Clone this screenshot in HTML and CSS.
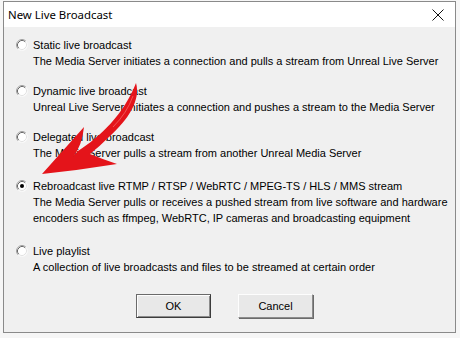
FILE: index.html
```html
<!DOCTYPE html>
<html>
<head>
<meta charset="utf-8">
<link rel="stylesheet" href="styles.css">
</head>
<body>
<div class="window">
  <div class="titlebar">
    <span class="title">New Live Broadcast</span>
    <svg class="close" width="12" height="12" viewBox="0 0 12 12"><path d="M0.5 0.5 L11.5 11.5 M11.5 0.5 L0.5 11.5" stroke="#111" stroke-width="1" fill="none"/></svg>
  </div>
  <div class="content">
    <div class="options">
      <div class="option">
        <div class="label-row">
          <svg class="radio" width="12" height="12" viewBox="0 0 12 12"><circle cx="6" cy="6" r="5.5" fill="#fff"/><path d="M2.11 9.89 A5.5 5.5 0 0 1 9.89 2.11" stroke="#a0a0a0" fill="none"/><path d="M2.82 9.18 A4.5 4.5 0 0 1 9.18 2.82" stroke="#696969" fill="none"/><path d="M9.89 2.11 A5.5 5.5 0 0 1 2.11 9.89" stroke="#f8f8f8" fill="none"/><path d="M9.18 2.82 A4.5 4.5 0 0 1 2.82 9.18" stroke="#e3e3e3" fill="none"/></svg>
          <span>Static live broadcast</span>
        </div>
        <div class="desc">The Media Server initiates a connection and pulls a stream from Unreal Live Server</div>
      </div>
      <div class="option">
        <div class="label-row">
          <svg class="radio" width="12" height="12" viewBox="0 0 12 12"><circle cx="6" cy="6" r="5.5" fill="#fff"/><path d="M2.11 9.89 A5.5 5.5 0 0 1 9.89 2.11" stroke="#a0a0a0" fill="none"/><path d="M2.82 9.18 A4.5 4.5 0 0 1 9.18 2.82" stroke="#696969" fill="none"/><path d="M9.89 2.11 A5.5 5.5 0 0 1 2.11 9.89" stroke="#f8f8f8" fill="none"/><path d="M9.18 2.82 A4.5 4.5 0 0 1 2.82 9.18" stroke="#e3e3e3" fill="none"/></svg>
          <span>Dynamic live broadcast</span>
        </div>
        <div class="desc">Unreal Live Server initiates a connection and pushes a stream to the Media Server</div>
      </div>
      <div class="option">
        <div class="label-row">
          <svg class="radio" width="12" height="12" viewBox="0 0 12 12"><circle cx="6" cy="6" r="5.5" fill="#fff"/><path d="M2.11 9.89 A5.5 5.5 0 0 1 9.89 2.11" stroke="#a0a0a0" fill="none"/><path d="M2.82 9.18 A4.5 4.5 0 0 1 9.18 2.82" stroke="#696969" fill="none"/><path d="M9.89 2.11 A5.5 5.5 0 0 1 2.11 9.89" stroke="#f8f8f8" fill="none"/><path d="M9.18 2.82 A4.5 4.5 0 0 1 2.82 9.18" stroke="#e3e3e3" fill="none"/></svg>
          <span>Delegated live broadcast</span>
        </div>
        <div class="desc">The Media Server pulls a stream from another Unreal Media Server</div>
      </div>
      <div class="option option-wide">
        <div class="label-row">
          <svg class="radio" width="12" height="12" viewBox="0 0 12 12"><circle cx="6" cy="6" r="5.5" fill="#fff"/><path d="M2.11 9.89 A5.5 5.5 0 0 1 9.89 2.11" stroke="#a0a0a0" fill="none"/><path d="M2.82 9.18 A4.5 4.5 0 0 1 9.18 2.82" stroke="#696969" fill="none"/><path d="M9.89 2.11 A5.5 5.5 0 0 1 2.11 9.89" stroke="#f8f8f8" fill="none"/><path d="M9.18 2.82 A4.5 4.5 0 0 1 2.82 9.18" stroke="#e3e3e3" fill="none"/><circle cx="6" cy="6" r="2" fill="#000"/></svg>
          <span>Rebroadcast live RTMP / RTSP / WebRTC / MPEG-TS / HLS / MMS stream</span>
        </div>
        <div class="desc">The Media Server pulls or receives a pushed stream from live software and hardware<br>encoders such as ffmpeg, WebRTC, IP cameras and broadcasting equipment</div>
      </div>
      <div class="option option-wide">
        <div class="label-row">
          <svg class="radio" width="12" height="12" viewBox="0 0 12 12"><circle cx="6" cy="6" r="5.5" fill="#fff"/><path d="M2.11 9.89 A5.5 5.5 0 0 1 9.89 2.11" stroke="#a0a0a0" fill="none"/><path d="M2.82 9.18 A4.5 4.5 0 0 1 9.18 2.82" stroke="#696969" fill="none"/><path d="M9.89 2.11 A5.5 5.5 0 0 1 2.11 9.89" stroke="#f8f8f8" fill="none"/><path d="M9.18 2.82 A4.5 4.5 0 0 1 2.82 9.18" stroke="#e3e3e3" fill="none"/></svg>
          <span>Live playlist</span>
        </div>
        <div class="desc">A collection of live broadcasts and files to be streamed at certain order</div>
      </div>
    </div>
    <div class="buttons">
      <button class="btn btn-default">OK</button>
      <button class="btn">Cancel</button>
    </div>
  </div>
</div>
<svg class="arrow" width="460" height="338" viewBox="0 0 460 338">
  <path d="M136 83 C141 100, 128 120, 110 136 Q100 146 90 154 Q102 159 117 164 Q80 170 42 174 L84 127 Q82 146 73 157 Q75 154 78 151 C100 137, 124 114, 136 83 Z" fill="#e4141a"/>
  <path d="M133 96 Q127 113 113 127" stroke="#f27070" stroke-width="0.7" fill="none"/>
</svg>
</body>
</html>
```
FILE: styles.css
```css
html, body {
  margin: 0;
  padding: 0;
}
body {
  background: #f6f6f6;
  width: 460px;
  height: 338px;
  position: relative;
  overflow: hidden;
  font-family: "Liberation Sans", Arial, sans-serif;
  font-size: 11px;
  color: #000;
}
.window {
  margin: 1px 0 0 3px;
  width: 453px;
  height: 332px;
  box-sizing: border-box;
  border: 1px solid #8a8a8a;
  background: #f0f0f0;
  display: flex;
  flex-direction: column;
}
.titlebar {
  height: 25px;
  background: #fff;
  display: flex;
  align-items: center;
  justify-content: space-between;
  padding: 0 11px 0 4px;
  flex-shrink: 0;
}
.title {
  font-family: "Noto Sans", "Open Sans", sans-serif;
  font-size: 11.4px;
  line-height: 16px;
}
.close {
  display: block;
}
.content {
  padding: 10px 0 0 12px;
  display: flex;
  flex-direction: column;
}
.options {
  display: flex;
  flex-direction: column;
  gap: 14px;
}
.option-wide {
  margin-top: 3px;
}
.label-row {
  display: flex;
  align-items: center;
  gap: 5px;
  height: 16px;
  line-height: 16px;
}
.radio {
  display: block;
  flex-shrink: 0;
}
.desc {
  margin-left: 17px;
  line-height: 16px;
  white-space: nowrap;
}
.buttons {
  display: flex;
  gap: 27px;
  margin-top: 19px;
  padding-left: 120px;
}
.btn {
  width: 75px;
  height: 24px;
  box-sizing: border-box;
  background: #e8e8e8;
  font-family: "Liberation Sans", Arial, sans-serif;
  font-size: 11px;
  color: #000;
  padding: 0;
  border: 1px solid;
  border-color: #fdfdfd #8c8c8c #8c8c8c #fdfdfd;
  box-shadow: 1px 1px 0 #6a6a6a;
}
.btn-default {
  border-color: #6a6a6a #3c3c3c #3c3c3c #6a6a6a;
  box-shadow: inset 1px 1px 0 #fdfdfd, inset -1px -1px 0 #8c8c8c;
}
.arrow {
  position: absolute;
  left: 0;
  top: 0;
  pointer-events: none;
}
```
